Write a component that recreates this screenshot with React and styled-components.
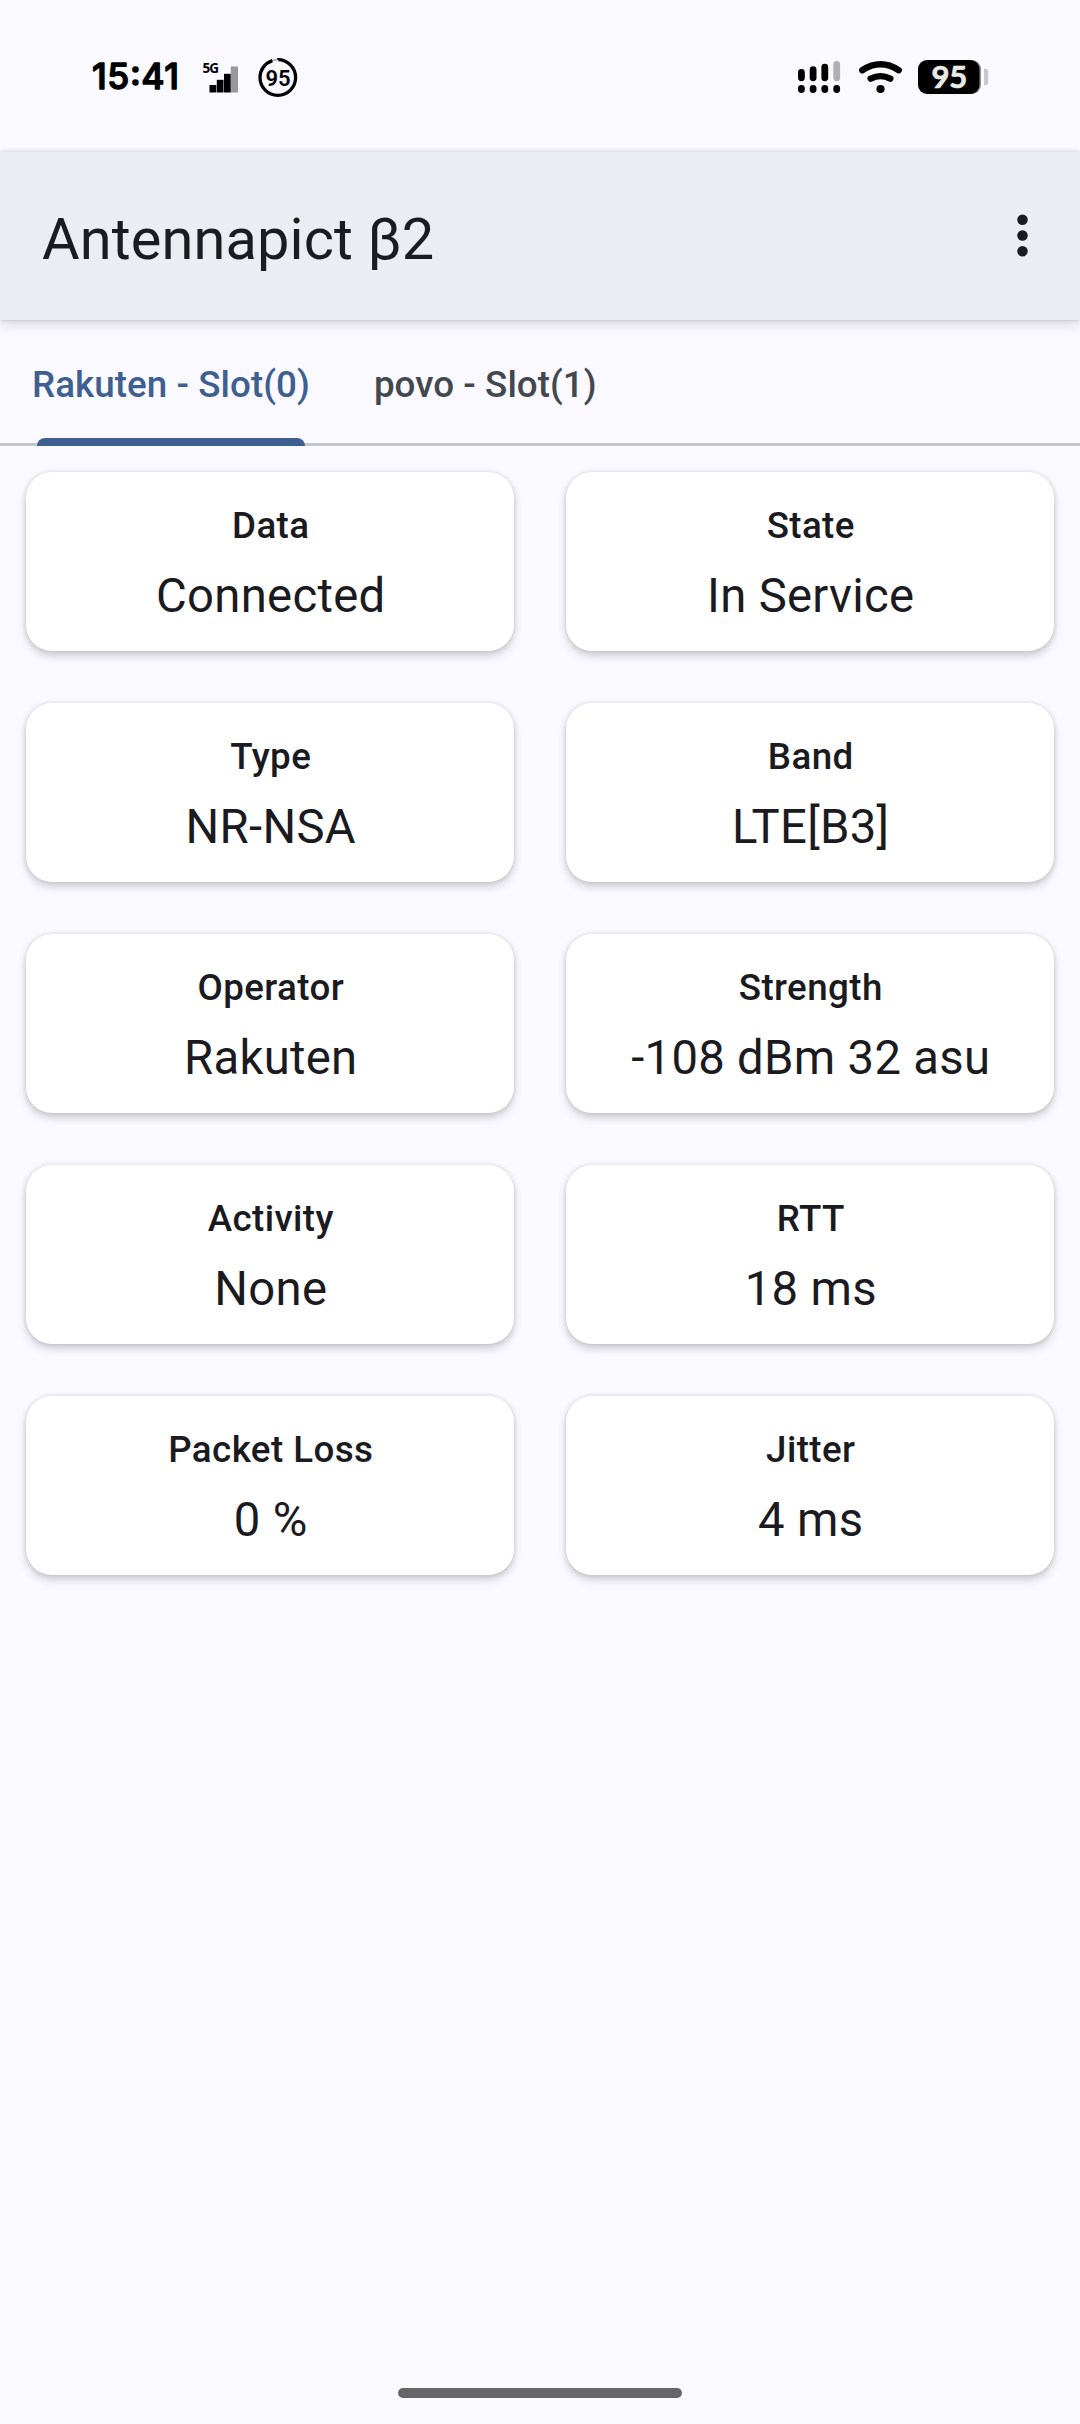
import React from "react";
import styled, { createGlobalStyle } from "styled-components";

const GlobalStyle = createGlobalStyle`
  * {
    box-sizing: border-box;
  }
  body {
    margin: 0;
    background-color: #faf9ff;
    font-family: Roboto, sans-serif;
  }
`;

const Screen = styled.div`
  display: flex;
  flex-direction: column;
  width: 1080px;
  height: 2424px;
  background-color: #faf9ff;
  color: #1b1b1f;
`;

const StatusBar = styled.div`
  display: flex;
  justify-content: space-between;
  height: 152px;
  padding: 50px 88px 0;
`;

const StatusGroup = styled.svg`
  display: block;
  width: ${(props) => props.$width}px;
  height: 56px;
`;

const Toolbar = styled.header`
  display: flex;
  align-items: center;
  justify-content: space-between;
  height: 168px;
  padding: 0 26px 0 42px;
  background-color: #ecedf3;
  box-shadow: 0 5px 12px rgba(0, 0, 0, 0.12), 0 0 5px rgba(0, 0, 0, 0.16);
`;

const Title = styled.h1`
  margin: 5px 0 0;
  font-size: 57.75px;
  font-weight: 400;
  line-height: 74px;
  letter-spacing: 0.1px;
  color: #1a1c20;
`;

const MenuButton = styled.button`
  display: flex;
  width: 63px;
  height: 63px;
  margin-bottom: 2px;
  padding: 0;
  border: 0;
  background: none;
  color: #1c1b1f;
`;

const TabBar = styled.nav`
  display: flex;
  height: 126px;
  border-bottom: 3px solid #c3c6cf;
`;

const Tab = styled.div`
  display: flex;
  flex-direction: column;
  align-items: center;
  height: 126px;
  padding: 44px 32px 0;
  font-size: 36.75px;
  font-weight: 500;
  line-height: 42px;
  letter-spacing: 0.06px;
  white-space: nowrap;
  color: ${(props) => (props.$active ? "#3e5f90" : "#43474e")};
`;

const Indicator = styled.div`
  width: 268px;
  height: 8px;
  margin-top: auto;
  border-radius: 8px 8px 0 0;
  background-color: #3e5f90;
`;

const CardGrid = styled.main`
  display: grid;
  grid-template-columns: 1fr 1fr;
  gap: 52px;
  padding: 26px;
`;

const Card = styled.div`
  display: flex;
  flex-direction: column;
  align-items: center;
  height: 179px;
  padding: 27px 0 0 1.5px;
  border-radius: 26px;
  background-color: #fff;
  box-shadow: 0 5px 9px rgba(0, 0, 0, 0.17), 0 0 5px rgba(0, 0, 0, 0.13);
`;

const CardLabel = styled.div`
  font-size: 36.75px;
  font-weight: 500;
  line-height: 53px;
  letter-spacing: 0.4px;
`;

const CardValue = styled.div`
  margin-top: 13px;
  font-size: 47.25px;
  line-height: 63px;
  letter-spacing: 0.3px;
`;

const NavPill = styled.div`
  width: 284px;
  height: 10px;
  margin: auto auto 26px;
  border-radius: 5px;
  background-color: #666;
`;

const tabs = ["Rakuten - Slot(0)", "povo - Slot(1)"];

const cards = [
  { label: "Data", value: "Connected" },
  { label: "State", value: "In Service" },
  { label: "Type", value: "NR-NSA" },
  { label: "Band", value: "LTE[B3]" },
  { label: "Operator", value: "Rakuten" },
  { label: "Strength", value: "-108 dBm 32 asu" },
  { label: "Activity", value: "None" },
  { label: "RTT", value: "18 ms" },
  { label: "Packet Loss", value: "0 %" },
  { label: "Jitter", value: "4 ms" },
];

// Clock, mobile signal and the battery ring
function StatusLeft() {
  return (
    <StatusGroup $width={220} viewBox="88 50 220 56">
      <text
        x="92"
        y="88.7"
        fontFamily="Inter"
        fontSize="35.5"
        fontWeight="500"
        textLength="87"
        stroke="#000"
        strokeWidth="1.4"
        strokeLinejoin="round"
      >
        15:41
      </text>
      <text
        x="202.5"
        y="72.8"
        fontFamily="Open Sans"
        fontSize="13.5"
        fontWeight="700"
        textLength="16.5"
      >
        5G
      </text>
      <rect x="209.5" y="85" width="6.8" height="7.5" />
      <rect x="216.8" y="79.8" width="6.7" height="12.7" />
      <rect x="224" y="73.8" width="6.8" height="18.7" />
      <rect x="230.8" y="66.5" width="7.2" height="26" fill="#98979b" />
      <circle
        cx="277.8"
        cy="77.5"
        r="17.8"
        fill="none"
        stroke="#a5a4a9"
        strokeWidth="1.4"
      />
      <circle
        cx="277.8"
        cy="77.5"
        r="17.8"
        fill="none"
        stroke="#000"
        strokeWidth="3.3"
        pathLength="100"
        strokeDasharray="95 5"
        transform="rotate(-90 277.8 77.5)"
      />
      <text
        x="278"
        y="85.5"
        fontFamily="Roboto"
        fontSize="22"
        fontWeight="600"
        textAnchor="middle"
      >
        95
      </text>
    </StatusGroup>
  );
}

const signalBars = [
  { x: 798, y: 69, fill: "#000" },
  { x: 809.7, y: 66.3, fill: "#000" },
  { x: 821.4, y: 63.7, fill: "#000" },
  { x: 833.3, y: 61, fill: "#b0afb4" },
];

// Dual sim signal, wifi and battery
function StatusRight() {
  return (
    <StatusGroup $width={202} viewBox="790 50 202 56">
      {signalBars.map((bar) => (
        <g key={bar.x}>
          <rect
            x={bar.x}
            y={bar.y}
            width="6.8"
            height={81.2 - bar.y}
            rx="3.4"
            fill={bar.fill}
          />
          <rect x={bar.x} y="85" width="6.8" height="8" rx="3.4" />
        </g>
      ))}
      <g fill="none" stroke="#000" strokeWidth="6.4" strokeLinecap="round">
        <path d="M862.3 70.2Q880.5 58.4 898.7 70.2" />
        <path d="M870.7 78.6Q880.5 73.6 890.3 78.6" />
      </g>
      <circle cx="880.5" cy="89" r="4.1" />
      <rect x="920" y="60" width="61" height="34" rx="9" fill="#8f8e92" />
      <rect x="918" y="60" width="61.5" height="34" rx="9" />
      <path d="M984 68.7h1.3a3 3 0 0 1 3 3v10.6a3 3 0 0 1-3 3H984z" fill="#c9c8ce" />
      <text
        x="949.3"
        y="88"
        fontFamily="Lato"
        fontSize="31"
        fontWeight="700"
        fill="#e9e9e6"
        stroke="#e9e9e6"
        strokeWidth="0.7"
        strokeLinejoin="round"
        textAnchor="middle"
        textLength="35.8"
      >
        95
      </text>
    </StatusGroup>
  );
}

function App() {
  return (
    <Screen>
      <GlobalStyle />
      <StatusBar>
        <StatusLeft />
        <StatusRight />
      </StatusBar>
      <Toolbar>
        <Title>Antennapict β2</Title>
        <MenuButton aria-label="More options">
          <svg width="63" height="63" viewBox="0 0 24 24" fill="currentColor">
            <circle cx="12" cy="6" r="2" />
            <circle cx="12" cy="12" r="2" />
            <circle cx="12" cy="18" r="2" />
          </svg>
        </MenuButton>
      </Toolbar>
      <TabBar>
        {tabs.map((tab, index) => (
          <Tab key={tab} $active={index === 0}>
            {tab}
            {index === 0 && <Indicator />}
          </Tab>
        ))}
      </TabBar>
      <CardGrid>
        {cards.map((card) => (
          <Card key={card.label}>
            <CardLabel>{card.label}</CardLabel>
            <CardValue>{card.value}</CardValue>
          </Card>
        ))}
      </CardGrid>
      <NavPill />
    </Screen>
  );
}

export default App;
